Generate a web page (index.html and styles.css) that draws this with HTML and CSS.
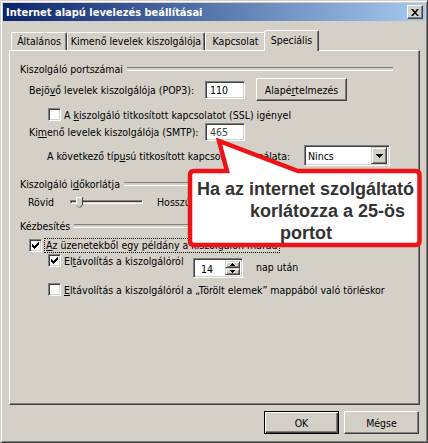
FILE: index.html
```html
<!DOCTYPE html>
<html lang="hu">
<head>
    <meta charset="UTF-8">
    <title>Internet alapú levelezés beállításai</title>
    <link rel="stylesheet" href="styles.css">
</head>
<body>

<div class="window">

    <!-- Title bar -->
    <div class="titlebar">
        <span>Internet alapú levelezés beállításai</span>
        <span class="close">
            <svg width="8" height="7" viewBox="0 0 8 7"><path d="M0 0h2l2 2.5 2-2.5h2l-3 3.5 3 3.5h-2l-2-2.5-2 2.5h-2l3-3.5z" fill="#000"/></svg>
        </span>
    </div>

    <!-- Tabs -->
    <div class="tabs">
        <div class="tab tab-general">Általános</div>
        <div class="tab tab-outgoing">Kimenő levelek kiszolgálója</div>
        <div class="tab tab-connection">Kapcsolat</div>
        <div class="tab tab-advanced active">Speciális</div>
    </div>

    <div class="panel">
        <div class="group"><span>Kiszolgáló portszámai</span></div>

        <div class="row pop3-row">
            <span class="port-label">Bejö<u>v</u>ő levelek kiszolgálója (POP3):</span>
            <span class="field">110</span>
            <button class="btn btn-reset">Alapé<u>r</u>telmezés</button>
        </div>

        <div class="row ssl-row">
            <span class="check"></span>
            <span class="check-text">A <u>k</u>iszolgáló titkosított kapcsolatot (SSL) igényel</span>
        </div>

        <div class="row smtp-row">
            <span class="port-label">Ki<u>m</u>enő levelek kiszolgálója (SMTP):</span>
            <span class="field field-grey">465</span>
        </div>

        <div class="row enc-row">
            <span class="enc-label">A következő típ<u>u</u>sú titkosított kapcsolat használata:</span>
            <span class="select">
                <span class="select-value">Nincs</span>
                <span class="select-arrow">
                    <svg width="7" height="4" viewBox="0 0 7 4"><path d="M0 0h7v1h-1v1h-1v1h-1v1h-1v-1h-1v-1h-1v-1h-1z" fill="#000"/></svg>
                </span>
            </span>
        </div>

        <div class="group timeout"><span>Kiszolgáló i<u>d</u>őkorlátja</span></div>

        <div class="row timeout-row">
            <span class="slider-min">Rövid</span>
            <span class="slider">
                <span class="track"></span>
                <svg class="thumb" width="7" height="11" viewBox="0 0 7 11">
                    <path d="M0 0h7v8l-3.5 3-3.5-3z" fill="#d4d0c8"/>
                    <path d="M0.5 8V0.5H6" stroke="#fff" fill="none"/>
                    <path d="M6.5 0v8l-3 2.8" stroke="#404040" fill="none"/>
                    <path d="M0.5 8l3 2.8" stroke="#808080" fill="none"/>
                </svg>
            </span>
            <span class="slider-max">Hosszú</span>
        </div>

        <div class="group delivery"><span>Kézbesítés</span></div>

        <div class="row keep-row">
            <span class="check">
                <svg width="7" height="7" viewBox="0 0 7 7"><path d="M0 2h1v3H0zM1 3h1v3H1zM2 4h1v3H2zM3 3h1v3H3zM4 2h1v3H4zM5 1h1v3H5zM6 0h1v3H6z" fill="#000"/></svg>
            </span>
            <span class="check-text focus"><u>A</u>z üzenetekből egy példány a kiszolgálón marad</span>
        </div>

        <div class="row remove-row">
            <span class="remove-label">
                <span class="check">
                    <svg width="7" height="7" viewBox="0 0 7 7"><path d="M0 2h1v3H0zM1 3h1v3H1zM2 4h1v3H2zM3 3h1v3H3zM4 2h1v3H4zM5 1h1v3H5zM6 0h1v3H6z" fill="#000"/></svg>
                </span>
                <span class="check-text">El<u>t</u>ávolítás a kiszolgálóról</span>
            </span>
            <span class="spin">
                <span class="spin-value">14</span>
                <span class="spin-buttons">
                    <span class="spin-btn"><svg width="5" height="3" viewBox="0 0 5 3"><path d="M2 0h1v1h1v1h1v1H0V2h1V1h1z" fill="#000"/></svg></span>
                    <span class="spin-btn"><svg width="5" height="3" viewBox="0 0 5 3"><path d="M0 0h5v1H4v1H3v1H2V2H1V1H0z" fill="#000"/></svg></span>
                </span>
            </span>
            <span class="days">nap után</span>
        </div>

        <div class="row trash-row">
            <span class="check"></span>
            <span class="check-text"><u>E</u>ltávolítás a kiszolgálóról a „Törölt elemek” mappából való törléskor</span>
        </div>
    </div>

    <div class="footer">
        <button class="btn btn-default">OK</button>
        <button class="btn">Mégse</button>
    </div>

    <!-- Note bubble pointing at the SMTP port -->
    <div class="callout">
        <svg width="238" height="110" viewBox="0 0 238 110">
            <path d="M8 33H41L33 3L112 33H229.5Q233.5 33 233.5 37V103Q233.5 107 229.5 107H8Q4 107 4 103V37Q4 33 8 33Z"
                  fill="#fff" stroke="#ec1218" stroke-width="4.5"/>
        </svg>
        <div class="callout-text">
            <div class="line-1">Ha az internet szolgáltató</div>
            <div class="line-2">korlátozza a 25-ös</div>
            <div class="line-3">portot</div>
        </div>
    </div>

</div>

</body>
</html>
```

FILE: styles.css
```css
* {
    margin: 0;
    padding: 0;
    box-sizing: border-box;
}
body {
    background: #d4d0c8;
    font-family: "DejaVu Sans Condensed", "Liberation Sans", sans-serif;
    font-size: 10.5px;
    color: #000;
}
u { text-decoration-thickness: 1px; }

/* Window frame */
.window {
    position: relative;
    width: 428px;
    height: 443px;
    padding: 2px;
    background: #d4d0c8;
    border: 1px solid;
    border-color: #d4d0c8 #404040 #404040 #d4d0c8;
    box-shadow: inset 1px 1px #fff, inset -1px -1px #808080;
}
.titlebar {
    display: flex;
    align-items: center;
    justify-content: space-between;
    height: 18px;
    padding: 0 2px 0 3px;
    background: linear-gradient(to right, #0a246a, #a6caf0);
    color: #fff;
    font-size: 11px;
    font-weight: bold;
}
.close {
    display: flex;
    align-items: center;
    justify-content: center;
    width: 16px;
    height: 14px;
    background: #d4d0c8;
    border: 1px solid;
    border-color: #fff #404040 #404040 #fff;
    box-shadow: inset -1px -1px #808080;
}

/* Tabs */
.tabs {
    display: flex;
    align-items: flex-end;
    height: 29px;
    padding-left: 8px;
}
.tab {
    height: 18px;
    line-height: 16px;
    text-align: center;
    white-space: nowrap;
    border: 1px solid;
    border-bottom: none;
    border-color: #fff #404040 transparent #fff;
    border-radius: 2px 2px 0 0;
    box-shadow: inset -1px 0 #808080;
}
.tab-general { width: 56px; }
.tab-outgoing { width: 138px; }
.tab-connection { width: 61px; }
.tab-advanced { width: 51px; }
.tab.active {
    position: relative;
    z-index: 1;
    width: 55px;
    height: 21px;
    margin: 0 -2px -1px;
    line-height: 18px;
    background: #d4d0c8;
}

.panel {
    width: 411px;
    height: 355px;
    margin-left: 6px;
    padding: 11px 26px 0 10px;
    border: 1px solid;
    border-color: #fff #404040 #404040 #fff;
    box-shadow: inset -1px -1px #808080;
}

/* Group headings with etched line */
.group {
    display: flex;
    align-items: center;
    gap: 4px;
    height: 13px;
    white-space: nowrap;
}
.group::after {
    content: "";
    flex: 1;
    height: 2px;
    border-top: 1px solid #808080;
    border-bottom: 1px solid #fff;
}
.group.timeout { margin-top: 11px; }
.group.delivery { margin-top: 9px; }

.row {
    display: flex;
    align-items: center;
    white-space: nowrap;
}
.row > * { flex: none; }
.pop3-row { margin-top: 3px; height: 23px; padding-left: 9px; }
.ssl-row { margin-top: 7px; height: 13px; padding-left: 28px; }
.smtp-row { margin-top: 2px; height: 18px; padding-left: 9px; }
.enc-row { margin-top: 4px; height: 21px; padding-left: 27px; }
.timeout-row { margin-top: 4px; height: 16px; padding-left: 8px; }
.keep-row { margin-top: 7px; height: 13px; padding-left: 9px; }
.remove-row { margin-top: 2px; height: 24px; padding-left: 28px; align-items: flex-start; }
.trash-row { margin-top: 5px; height: 13px; padding-left: 28px; }

.port-label { width: 176px; }
.enc-label { width: 257px; }

/* Sunken controls */
.field, .check, .select, .spin, .track {
    background: #fff;
    border: 1px solid;
    border-color: #808080 #fff #fff #808080;
    box-shadow: inset 1px 1px #404040, inset -1px -1px #d4d0c8;
}
.field {
    width: 40px;
    height: 18px;
    padding: 0 4px;
    line-height: 16px;
}
.field-grey { color: #444; }

.check {
    display: flex;
    align-items: center;
    justify-content: center;
    flex: none;
    width: 13px;
    height: 13px;
}
.check-text { margin-left: 3px; }
.focus {
    margin-left: 2px;
    padding: 0 1px;
    line-height: 13px;
    border: 1px dotted #000;
}

.select {
    display: flex;
    align-items: center;
    width: 86px;
    height: 21px;
    padding: 2px;
}
.select-value { flex: 1; padding-left: 1px; }
.select-arrow, .spin-btn {
    display: flex;
    align-items: center;
    justify-content: center;
    background: #d4d0c8;
    border: 1px solid;
    border-color: #d4d0c8 #404040 #404040 #d4d0c8;
    box-shadow: inset 1px 1px #fff, inset -1px -1px #808080;
}
.select-arrow { width: 16px; height: 17px; }

/* Timeout slider */
.slider-min { width: 42px; }
.slider {
    position: relative;
    display: flex;
    align-items: center;
    width: 73px;
    height: 16px;
}
.track { flex: 1; height: 4px; background: #d4d0c8; }
.thumb { position: absolute; left: 6px; top: 3px; }
.slider-max { margin-left: 14px; }

/* Delete after N days */
.remove-label { display: flex; align-items: center; width: 145px; }
.spin {
    display: flex;
    width: 50px;
    height: 20px;
    margin-top: 4px;
    padding: 2px;
}
.spin-value { flex: 1; padding-left: 5px; line-height: 16px; }
.spin-buttons { display: flex; flex-direction: column; width: 15px; }
.spin-btn { flex: 1; }
.days { margin: 7px 0 0 13px; }

/* Dialog buttons */
.footer {
    display: flex;
    justify-content: flex-end;
    gap: 5px;
    margin-top: 6px;
    padding-right: 6px;
}
.btn {
    width: 75px;
    height: 23px;
    font: inherit;
    color: #000;
    background: #d4d0c8;
    border: 1px solid;
    border-color: #fff #404040 #404040 #fff;
    box-shadow: inset -1px -1px #808080;
}
.btn-default {
    border-color: #000;
    box-shadow: inset 1px 1px #fff, inset -1px -1px #404040, inset -2px -2px #808080;
}
.btn-reset { width: 91px; margin-left: 11px; }

/* Red note bubble */
.callout {
    position: absolute;
    left: 185px;
    top: 137px;
    width: 238px;
    height: 110px;
}
.callout svg { display: block; }
.callout-text {
    position: absolute;
    left: 0;
    top: 40px;
    font-family: "Liberation Sans", Arial, sans-serif;
    font-weight: bold;
    font-size: 18px;
    line-height: 22px;
    color: #333;
    white-space: nowrap;
}
.line-1 { padding-left: 11px; }
.line-2 { padding-left: 64px; }
.line-3 { padding-left: 94px; }
```
